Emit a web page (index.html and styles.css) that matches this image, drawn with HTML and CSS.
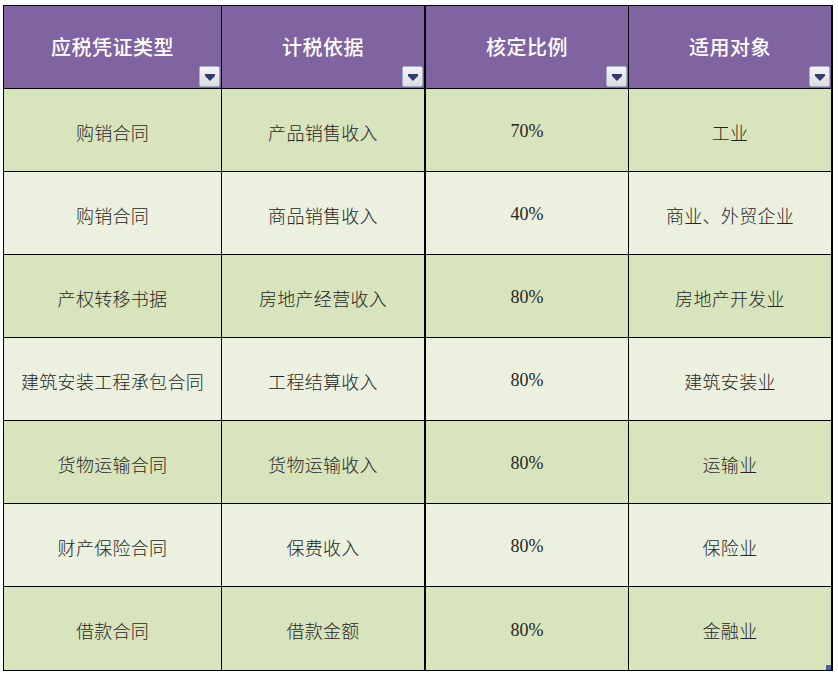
FILE: index.html
```html
<!DOCTYPE html>
<html lang="zh-CN">
<head>
<meta charset="utf-8">
<title>应税凭证</title>
<link rel="stylesheet" href="styles.css">
</head>
<body>
<div class="sheet">
  <div class="grid">
    <div class="cell head c1">应税凭证类型<span class="dd"><i></i></span></div>
    <div class="cell head c2">计税依据<span class="dd"><i></i></span></div>
    <div class="cell head c3">核定比例<span class="dd"><i></i></span></div>
    <div class="cell head c4">适用对象<span class="dd"><i></i></span></div>

    <div class="cell dark c1">购销合同</div>
    <div class="cell dark c2">产品销售收入</div>
    <div class="cell dark c3 num">70%</div>
    <div class="cell dark c4">工业</div>

    <div class="cell light c1">购销合同</div>
    <div class="cell light c2">商品销售收入</div>
    <div class="cell light c3 num">40%</div>
    <div class="cell light c4">商业、外贸企业</div>

    <div class="cell dark c1">产权转移书据</div>
    <div class="cell dark c2">房地产经营收入</div>
    <div class="cell dark c3 num">80%</div>
    <div class="cell dark c4">房地产开发业</div>

    <div class="cell light c1">建筑安装工程承包合同</div>
    <div class="cell light c2">工程结算收入</div>
    <div class="cell light c3 num">80%</div>
    <div class="cell light c4">建筑安装业</div>

    <div class="cell dark c1">货物运输合同</div>
    <div class="cell dark c2">货物运输收入</div>
    <div class="cell dark c3 num">80%</div>
    <div class="cell dark c4">运输业</div>

    <div class="cell light c1">财产保险合同</div>
    <div class="cell light c2">保费收入</div>
    <div class="cell light c3 num">80%</div>
    <div class="cell light c4">保险业</div>

    <div class="cell dark c1">借款合同</div>
    <div class="cell dark c2">借款金额</div>
    <div class="cell dark c3 num">80%</div>
    <div class="cell dark c4 last">金融业<span class="handle"></span></div>
  </div>
</div>
</body>
</html>
```

FILE: styles.css
```css
html, body {
  margin: 0;
  padding: 0;
  background: #ffffff;
}
body {
  font-family: "Noto Sans CJK SC", "Noto Sans", sans-serif;
}
.sheet {
  padding: 5px 0 0 3px;
}
.grid {
  display: grid;
  grid-template-columns: 218px 204px 203px 202px;
  grid-auto-rows: 83px;
  width: max-content;
  border-top: 1px solid #000;
  border-left: 1px solid #000;
  border-right: 2px solid #000;
  border-bottom: 1px solid #000;
}
.cell {
  position: relative;
  display: flex;
  align-items: center;
  justify-content: center;
  border-bottom: 1px solid #000;
  font-size: 18px;
  font-weight: 300;
  color: #262626;
  white-space: nowrap;
  padding-top: 3px;
  letter-spacing: 0.3px;
}
.c1, .c3 {
  border-right: 1px solid #000;
}
.c2 {
  border-right: 2px solid #000;
}
.head {
  background: #8064a2;
  color: #ffffff;
  font-size: 20px;
  font-weight: 500;
  padding-top: 0;
  padding-bottom: 2px;
  letter-spacing: 0.5px;
}
.dark {
  background: #d8e4bc;
}
.light {
  background: #ebf1de;
}
.num {
  font-family: "Liberation Serif", serif;
  font-size: 18px;
  font-weight: 400;
  letter-spacing: 0;
}
.grid > .cell:nth-last-child(-n+4) {
  border-bottom: none;
}
.dd {
  position: absolute;
  right: 1px;
  bottom: 1px;
  width: 21px;
  height: 21px;
  box-sizing: border-box;
  border: 1px solid #a4aec8;
  border-radius: 2px;
  background: linear-gradient(#f4f4f6, #dcdde2);
  display: flex;
  align-items: center;
  justify-content: center;
}
.dd i {
  display: block;
  width: 0;
  height: 0;
  border-left: 5px solid transparent;
  border-right: 5px solid transparent;
  border-top: 5px solid #343c6e;
  position: relative;
  margin-top: 3px;
}
.dd i::before {
  content: "";
  position: absolute;
  left: -5px;
  top: -7px;
  width: 10px;
  height: 2px;
  background: #343c6e;
}
.handle {
  position: absolute;
  right: 0;
  bottom: 0;
  width: 5px;
  height: 5px;
  background: #4a5fb0;
}
```
